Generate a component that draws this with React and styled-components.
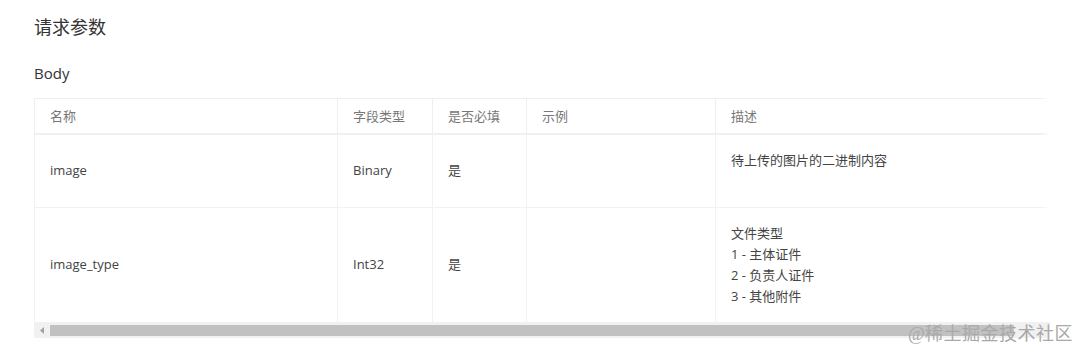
import styled, { createGlobalStyle } from 'styled-components';

const GlobalStyle = createGlobalStyle`
  html, body {
    margin: 0;
    padding: 0;
    background: #fff;
  }
  body {
    font-family: 'Open Sans', 'Noto Sans CJK SC', sans-serif;
    color: #333;
  }
`;

const Page = styled.div`
  position: relative;
  width: 1080px;
  height: 351px;
  padding: 14px 0 0 34px;
  box-sizing: border-box;
  overflow: hidden;
`;

const Title = styled.h2`
  margin: 0;
  font-size: 18px;
  line-height: 26px;
  font-weight: 400;
  color: #333;
`;

const SubTitle = styled.h3`
  margin: 22px 0 14px;
  font-size: 15px;
  line-height: 22px;
  font-weight: 400;
  color: #333;
`;

const TableWrap = styled.div`
  position: relative;
  width: 1016px;
  overflow: hidden;

  &::after {
    content: '';
    position: absolute;
    top: 0;
    right: 0;
    bottom: 16px;
    width: 10px;
    background: linear-gradient(to right, rgba(255, 255, 255, 0), #fff);
  }
`;

const Table = styled.table`
  width: 1030px;
  border-collapse: collapse;
  table-layout: fixed;
  font-size: 13px;
`;

const HeadCell = styled.th`
  height: 35px;
  padding: 0 15px;
  box-sizing: border-box;
  text-align: left;
  font-weight: 400;
  color: #777;
  border: 1px solid #efefef;
  border-bottom: 2px solid #f0f0f0;
  line-height: 20px;
`;

const Cell = styled.td`
  padding: 15px;
  line-height: 21px;
  color: #444;
  vertical-align: ${(p) => (p.$top ? 'top' : 'middle')};
  border: 1px solid #f2f2f2;
`;

const Line = styled.div`
  min-height: 21px;
`;

const ScrollBar = styled.div`
  display: flex;
  align-items: center;
  height: 15px;
  width: 1016px;
  background: #f1f1f1;
  box-sizing: border-box;
  padding-right: 36px;
`;

const Arrow = styled.div`
  width: 16px;
  display: flex;
  justify-content: center;
  align-items: center;
`;

const Thumb = styled.div`
  flex: 1;
  height: 11px;
  background: #c1c1c1;
`;

const Watermark = styled.div`
  position: absolute;
  right: 7px;
  bottom: 6px;
  font-family: 'Liberation Serif', 'Noto Sans CJK SC', serif;
  font-size: 18px;
  line-height: 22px;
  color: #a9a9a9;
  letter-spacing: 0.5px;
`;

const columns = [
  { key: 'name', label: '名称', width: 303 },
  { key: 'type', label: '字段类型', width: 95 },
  { key: 'required', label: '是否必填', width: 94 },
  { key: 'example', label: '示例', width: 189 },
  { key: 'desc', label: '描述', width: 349 },
];

const rows = [
  {
    name: 'image',
    type: 'Binary',
    required: '是',
    example: '',
    desc: ['待上传的图片的二进制内容', ''],
  },
  {
    name: 'image_type',
    type: 'Int32',
    required: '是',
    example: '',
    desc: ['文件类型', '1 - 主体证件', '2 - 负责人证件', '3 - 其他附件'],
  },
];

function App() {
  return (
    <Page>
      <GlobalStyle />
      <Title>请求参数</Title>
      <SubTitle>Body</SubTitle>
      <TableWrap>
        <Table>
          <colgroup>
            {columns.map((c) => (
              <col key={c.key} style={{ width: c.width }} />
            ))}
          </colgroup>
          <thead>
            <tr>
              {columns.map((c) => (
                <HeadCell key={c.key}>{c.label}</HeadCell>
              ))}
            </tr>
          </thead>
          <tbody>
            {rows.map((r) => (
              <tr key={r.name}>
                <Cell>{r.name}</Cell>
                <Cell>{r.type}</Cell>
                <Cell>{r.required}</Cell>
                <Cell>{r.example}</Cell>
                <Cell $top>
                  {r.desc.map((l, i) => (
                    <Line key={i}>{l}</Line>
                  ))}
                </Cell>
              </tr>
            ))}
          </tbody>
        </Table>
        <ScrollBar>
          <Arrow>
            <svg width="5" height="7" viewBox="0 0 5 7">
              <path d="M4 0 L0 3.5 L4 7 Z" fill="#a3a3a3" />
            </svg>
          </Arrow>
          <Thumb />
        </ScrollBar>
      </TableWrap>
      <Watermark>@稀土掘金技术社区</Watermark>
    </Page>
  );
}

export default App;
